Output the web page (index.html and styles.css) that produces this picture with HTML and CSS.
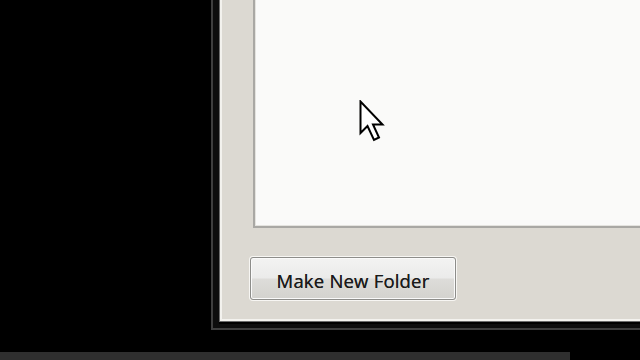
FILE: index.html
```html
<!DOCTYPE html>
<html lang="en">
<head>
  <meta charset="UTF-8">
  <title>Browse For Folder</title>
  <link rel="stylesheet" href="styles.css">
</head>
<body>
  <div class="desk">
    <div class="window">
      <div class="frame">
        <div class="panel">
          <div class="tree"></div>
          <div class="actions">
            <button class="btn">Make New Folder</button>
          </div>
        </div>
      </div>
    </div>
  </div>
  <div class="taskbar"></div>

  <!-- mouse pointer sits over the folder list -->
  <svg class="cursor" width="26" height="44" viewBox="0 0 26 44">
    <path d="M1.5 1.5 L1.5 33 L8.5 26 L15 40 L20 37.5 L14 24.5 L23.5 24.5 Z"
          fill="#fff" stroke="#000" stroke-width="2" stroke-linejoin="miter"/>
  </svg>
</body>
</html>
```

FILE: styles.css
```css
html, body {
  margin: 0;
  height: 360px;
  overflow: hidden;
}

body {
  background: #000;
  font-family: "Open Sans", "Noto Sans", "DejaVu Sans", sans-serif;
  position: relative;
}

.desk {
  height: 352px;
  padding-left: 211px;
  display: flex;
  align-items: flex-start;
}

.window {
  flex: 1;
  height: 328px;
  border-left: 2px solid #3f3f3f;
  border-bottom: 2px solid #3f3f3f;
}

.frame {
  height: 324px;
  border-left: 6px solid #0d0d0d;
  border-bottom: 4px solid #0d0d0d;
}

.panel {
  height: 321px;
  background: #dcd9d2;
  border-left: 1px solid #6b6b6b;
  border-bottom: 1px solid #6b6b6b;
  box-shadow: inset 2px -2px 0 #f3f2ee;
  display: flex;
  flex-direction: column;
  padding-left: 33px;
}

.tree {
  height: 226px;
  background: #fafaf9;
  border-left: 2px solid #a9a8a4;
  border-bottom: 2px solid #a9a8a4;
  box-shadow: inset 1px -1px 0 #e4e3df;
}

.actions {
  padding-top: 29px;
  margin-left: -3px;
}

.btn {
  width: 206px;
  height: 43px;
  border: 1px solid #8d8d8a;
  border-radius: 3px;
  box-shadow: 0 0 0 1px #f7f6f3, inset 0 0 0 1px #fafafa;
  background: linear-gradient(#f3f3f2 0%, #ebebea 48%, #dddcd9 52%, #d3d2ce 100%);
  color: #1a1a1a;
  font-family: "Open Sans", "Noto Sans", sans-serif;
  font-size: 18.5px;
  text-shadow: 0 0 0.6px #333;
  padding: 3px 0 0;
  letter-spacing: 0.2px;
}

.taskbar {
  width: 570px;
  height: 8px;
  background: #2f2f2f;
}

.cursor {
  position: absolute;
  left: 359px;
  top: 100px;
}
```
